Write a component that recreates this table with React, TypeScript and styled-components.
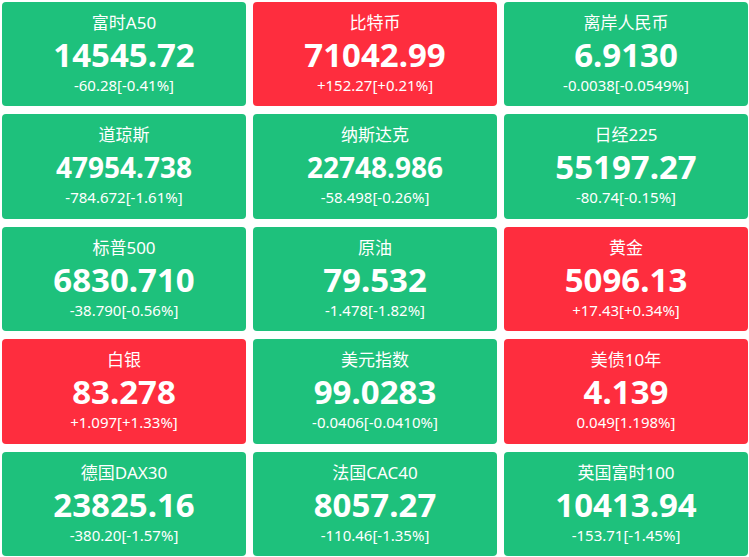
import React from 'react';
import styled, { createGlobalStyle } from 'styled-components';

const GlobalStyle = createGlobalStyle`
  html, body {
    margin: 0;
    padding: 0;
    background: #fff;
  }
  body {
    font-family: "Noto Sans", "Noto Sans CJK SC", sans-serif;
  }
`;

type Quote = {
  name: string;
  price: string;
  change: string;
  up: boolean;
};

const quotes: Quote[] = [
  { name: '富时A50', price: '14545.72', change: '-60.28[-0.41%]', up: false },
  { name: '比特币', price: '71042.99', change: '+152.27[+0.21%]', up: true },
  { name: '离岸人民币', price: '6.9130', change: '-0.0038[-0.0549%]', up: false },
  { name: '道琼斯', price: '47954.738', change: '-784.672[-1.61%]', up: false },
  { name: '纳斯达克', price: '22748.986', change: '-58.498[-0.26%]', up: false },
  { name: '日经225', price: '55197.27', change: '-80.74[-0.15%]', up: false },
  { name: '标普500', price: '6830.710', change: '-38.790[-0.56%]', up: false },
  { name: '原油', price: '79.532', change: '-1.478[-1.82%]', up: false },
  { name: '黄金', price: '5096.13', change: '+17.43[+0.34%]', up: true },
  { name: '白银', price: '83.278', change: '+1.097[+1.33%]', up: true },
  { name: '美元指数', price: '99.0283', change: '-0.0406[-0.0410%]', up: false },
  { name: '美债10年', price: '4.139', change: '0.049[1.198%]', up: true },
  { name: '德国DAX30', price: '23825.16', change: '-380.20[-1.57%]', up: false },
  { name: '法国CAC40', price: '8057.27', change: '-110.46[-1.35%]', up: false },
  { name: '英国富时100', price: '10413.94', change: '-153.71[-1.45%]', up: false },
];

const Board = styled.div`
  display: grid;
  grid-template-columns: repeat(3, 1fr);
  grid-template-rows: repeat(5, 1fr);
  column-gap: 7px;
  row-gap: 8px;
  padding: 2px 1px 1px 2px;
  width: 749px;
  height: 557px;
  box-sizing: border-box;
`;

const Tile = styled.div<{ $up: boolean }>`
  display: flex;
  flex-direction: column;
  align-items: center;
  border-radius: 4px;
  background: ${(p) => (p.$up ? '#fe2d3e' : '#1ec17c')};
  color: #fff;
  padding-top: 9px;
  box-sizing: border-box;
  overflow: hidden;
`;

const Name = styled.div`
  font-size: 17px;
  line-height: 24px;
  font-family: "Noto Sans", "Noto Sans CJK SC", sans-serif;
`;

const Price = styled.div<{ $long: boolean }>`
  font-size: ${(p) => (p.$long ? '28px' : '33px')};
  font-weight: 700;
  line-height: 40px;
  white-space: nowrap;
`;

const Change = styled.div`
  font-size: 15px;
  line-height: 20px;
  white-space: nowrap;
`;

export default function App() {
  return (
    <>
      <GlobalStyle />
      <Board>
        {quotes.map((q) => (
          <Tile key={q.name} $up={q.up}>
            <Name>{q.name}</Name>
            <Price $long={q.price.length > 8}>{q.price}</Price>
            <Change>{q.change}</Change>
          </Tile>
        ))}
      </Board>
    </>
  );
}
